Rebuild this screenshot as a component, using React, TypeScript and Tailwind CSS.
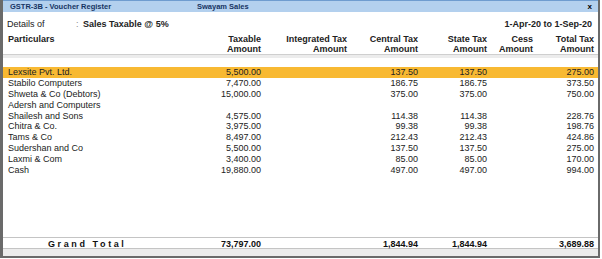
const rows = [
  { name: 'Lexsite Pvt. Ltd.', taxable: '5,500.00', central: '137.50', state: '137.50', total: '275.00' },
  { name: 'Stabilo Computers', taxable: '7,470.00', central: '186.75', state: '186.75', total: '373.50' },
  { name: 'Shweta & Co (Debtors)', taxable: '15,000.00', central: '375.00', state: '375.00', total: '750.00' },
  { name: 'Adersh and Computers', taxable: '', central: '', state: '', total: '' },
  { name: 'Shailesh and Sons', taxable: '4,575.00', central: '114.38', state: '114.38', total: '228.76' },
  { name: 'Chitra & Co.', taxable: '3,975.00', central: '99.38', state: '99.38', total: '198.76' },
  { name: 'Tams & Co', taxable: '8,497.00', central: '212.43', state: '212.43', total: '424.86' },
  { name: 'Sudershan and Co', taxable: '5,500.00', central: '137.50', state: '137.50', total: '275.00' },
  { name: 'Laxmi & Com', taxable: '3,400.00', central: '85.00', state: '85.00', total: '170.00' },
  { name: 'Cash', taxable: '19,880.00', central: '497.00', state: '497.00', total: '994.00' },
]

const cols = 'grid grid-cols-[198px_60px_86px_71px_69px_46px_61px] pr-[3px]'

function Row({ r, active }: { r: (typeof rows)[number]; active?: boolean }) {
  return (
    <div className={`${cols} h-[10.9px] leading-[10.9px] ${active ? 'bg-[#f8b932]' : ''}`}>
      <div className="pl-[5px]">{r.name}</div>
      <div className="text-right">{r.taxable}</div>
      <div className="text-right"></div>
      <div className="text-right">{r.central}</div>
      <div className="text-right">{r.state}</div>
      <div className="text-right"></div>
      <div className="text-right">{r.total}</div>
    </div>
  )
}

export default function App() {
  return (
    <div className="w-[600px] h-[258px] flex flex-col bg-white border-l-[3px] border-r-2 border-b-2 border-[#6a6a6a] font-['Liberation_Sans',Arial,sans-serif] text-[9px] text-[#222]">
      <div className="h-[12px] flex items-center justify-between bg-[#b3d0ee] border-t border-[#6f9ccf] pl-[7px] pr-[6px] text-[7.5px] font-bold text-[#163463]">
        <div className="flex">
          <span className="w-[187px]">GSTR-3B - Voucher Register</span>
          <span>Swayam Sales</span>
        </div>
        <span className="text-[8px] text-black">x</span>
      </div>

      <div className="h-[18px] pt-[6px] leading-[12px] flex justify-between pl-[4px] pr-[6px]">
        <div className="flex">
          <span className="w-[69px]">Details of</span>
          <span className="w-[7px] text-[#888]">:</span>
          <span className="font-bold">Sales Taxable @ 5%</span>
        </div>
        <span className="font-bold">1-Apr-20 to 1-Sep-20</span>
      </div>

      <div className={`${cols} pt-[4px] h-[25px] leading-[10px] font-bold border-b border-[#cfcfcf]`}>
        <div className="pl-[5px]">Particulars</div>
        <div className="text-right">Taxable<br />Amount</div>
        <div className="text-right">Integrated Tax<br />Amount</div>
        <div className="text-right">Central Tax<br />Amount</div>
        <div className="text-right">State Tax<br />Amount</div>
        <div className="text-right">Cess<br />Amount</div>
        <div className="text-right">Total Tax<br />Amount</div>
      </div>
      <div className="h-[3px] bg-[#ececec]" />

      <div className="flex-1 pt-[9px]">
        {rows.map((r, i) => (
          <Row key={r.name} r={r} active={i === 0} />
        ))}
      </div>

      <div className={`${cols} h-[12px] leading-[12px] font-bold border-t border-b border-[#c4c4c4] text-[#111]`}>
        <div className="pl-[45px] tracking-[2.6px]">Grand Total</div>
        <div className="text-right">73,797.00</div>
        <div />
        <div className="text-right">1,844.94</div>
        <div className="text-right">1,844.94</div>
        <div />
        <div className="text-right">3,689.88</div>
      </div>
      <div className="h-[7px] bg-[#ececec]" />
    </div>
  )
}
